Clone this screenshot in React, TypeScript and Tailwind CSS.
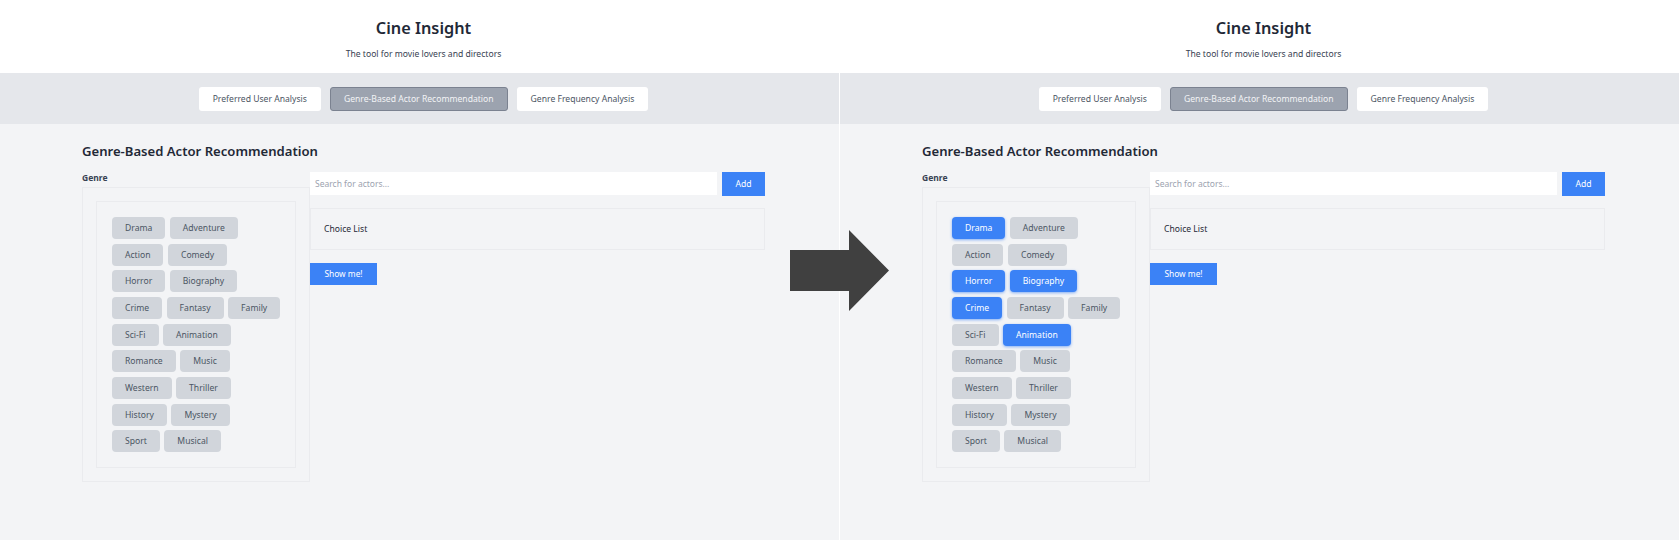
import { useState } from 'react';

const genres = [
  'Drama',
  'Adventure',
  'Action',
  'Comedy',
  'Horror',
  'Biography',
  'Crime',
  'Fantasy',
  'Family',
  'Sci-Fi',
  'Animation',
  'Romance',
  'Music',
  'Western',
  'Thriller',
  'History',
  'Mystery',
  'Sport',
  'Musical',
];

const tabs = ['Preferred User Analysis', 'Genre-Based Actor Recommendation', 'Genre Frequency Analysis'];

function Panel({ picked }: { picked: string[] }) {
  const [query, setQuery] = useState('');

  return (
    <div className="flex h-full w-[839px] shrink-0 flex-col bg-[#f3f4f6]">
      <header className="flex h-[73px] flex-col items-center bg-white pl-2">
        <h1 className="mt-[16px] text-[16.3px] leading-[24px] font-semibold text-[#1f2937]">Cine Insight</h1>
        <p className="mt-[7px] text-[8.6px] leading-[14px] text-[#374151]">The tool for movie lovers and directors</p>
      </header>

      <nav className="flex h-[51px] items-center justify-center gap-[9px] bg-[#e5e7eb] pl-2">
        {tabs.map((tab, i) => (
          <button
            key={tab}
            className={
              i === 1
                ? 'h-[24px] rounded-[3px] border border-[#7b8290] bg-[#9ca3af] px-[13px] pt-px text-[8.6px] text-[#f3f4f6]'
                : 'h-[24px] rounded-[3px] bg-white px-[14px] pt-px text-[8.6px] text-[#4b5563]'
            }
          >
            {tab}
          </button>
        ))}
      </nav>

      <main className="flex flex-col pl-[82px]">
        <h2 className="mt-[17px] text-[13.1px] leading-[20px] font-semibold text-[#1f2937]">
          Genre-Based Actor Recommendation
        </h2>
        <div className="mt-[10px] flex">
          <section className="mt-px w-[228px]">
            <p className="text-[8.5px] leading-[12px] font-bold text-[#374151]">Genre</p>
            <div className="mt-[3px] border border-[#e5e7eb]/70 p-[13px]">
              <div className="flex flex-wrap content-start gap-x-[4.5px] gap-y-[4.67px] border border-[#e5e7eb]/70 py-[15px] pr-[14.5px] pl-[15px]">
                {genres.map((genre) => (
                  <button
                    key={genre}
                    className={
                      picked.includes(genre)
                        ? 'h-[22px] rounded-[4px] bg-[#3b82f6] px-[13px] pt-px text-[8.6px] text-white shadow-[0_1px_3px_rgba(59,130,246,0.6)]'
                        : 'h-[22px] rounded-[4px] bg-[#d1d5db] px-[13px] pt-px text-[8.6px] text-[#4b5563]'
                    }
                  >
                    {genre}
                  </button>
                ))}
              </div>
            </div>
          </section>

          <section className="mt-px flex w-[455px] flex-col">
            <div className="flex gap-[5px]">
              <input
                value={query}
                onChange={(event) => setQuery(event.target.value)}
                placeholder="Search for actors..."
                className="h-[23px] flex-1 bg-white px-[5px] text-[8.5px] placeholder:text-[#9ca3af] focus:outline-none"
              />
              <button className="h-[24px] w-[43px] bg-[#3b82f6] text-[8.6px] text-white">Add</button>
            </div>
            <div className="mt-[12px] flex h-[42px] items-center border border-[#e5e7eb]/70 pl-[13px] text-[8.6px] text-[#1f2937]">
              Choice List
            </div>
            <button className="mt-[13px] h-[22px] w-[67px] bg-[#3b82f6] text-[8.4px] text-white">Show me!</button>
          </section>
        </div>
      </main>
    </div>
  );
}

export default function App() {
  return (
    <div className="relative flex h-[540px] w-[1679px] overflow-hidden bg-white font-['Noto_Sans',sans-serif]">
      <Panel picked={[]} />
      <div className="w-px shrink-0 bg-white" />
      <Panel picked={['Drama', 'Horror', 'Biography', 'Crime', 'Animation']} />
      <svg className="absolute top-[230px] left-[790px] h-[81px] w-[99px]" viewBox="0 0 99 81">
        <path d="M0 20H59V0L99 40.5L59 81V61H0Z" fill="#404040" />
      </svg>
    </div>
  );
}
